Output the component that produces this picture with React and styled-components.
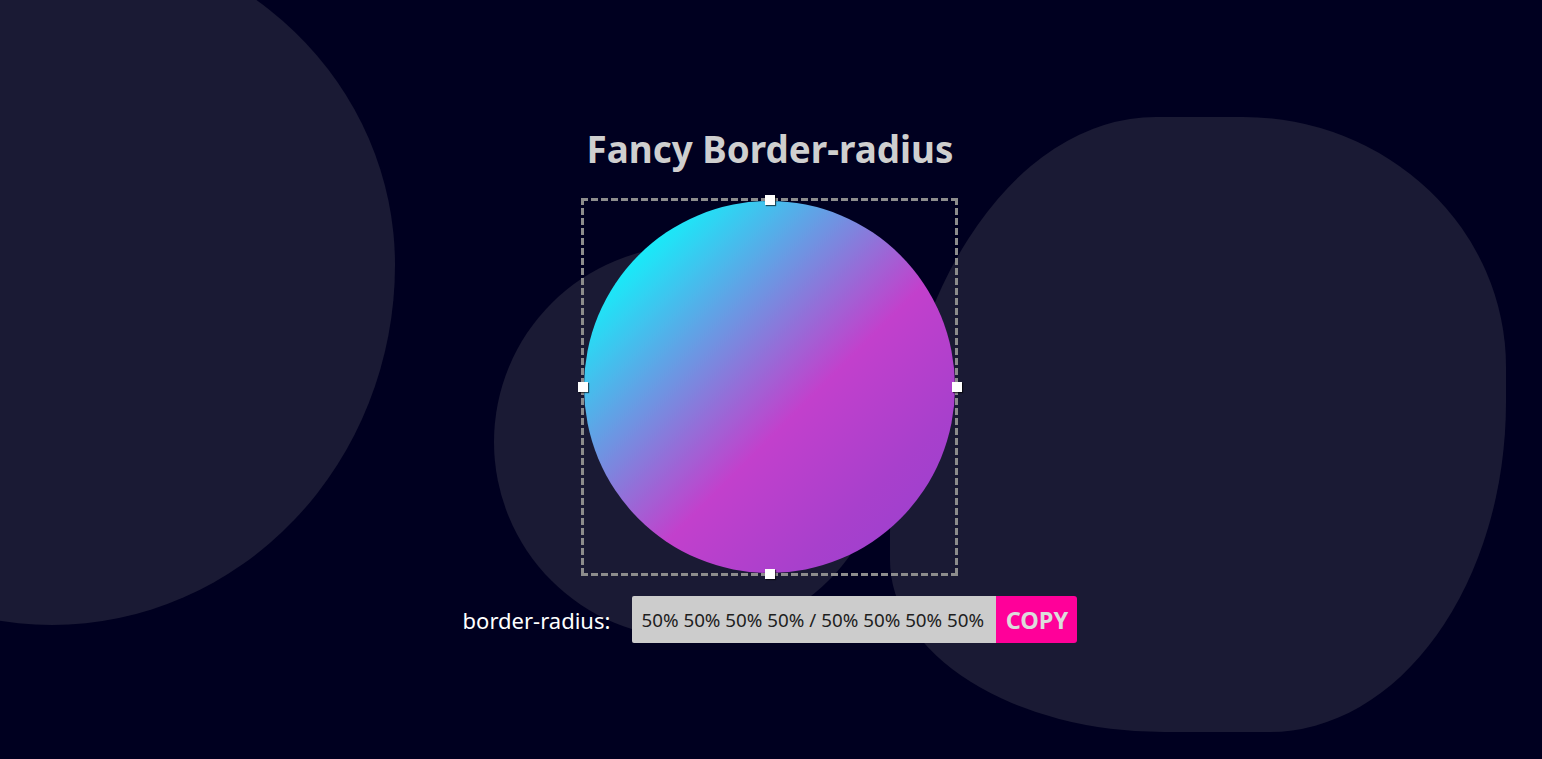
import React from "react";
import styled, { createGlobalStyle } from "styled-components";

const GlobalStyle = createGlobalStyle`
  html, body {
    margin: 0;
    padding: 0;
    background: #000020;
    font-family: "Noto Sans", "Open Sans", "Noto Sans CJK KR", sans-serif;
    overflow: hidden;
  }
`;

const Page = styled.div`
  position: relative;
  min-height: 100vh;
  overflow: hidden;
  display: flex;
  flex-direction: column;
  align-items: center;
  padding-top: 127px;
  box-sizing: border-box;
`;

// decorative background shapes
const Blob = styled.div`
  position: absolute;
  left: ${(p) => p.x}px;
  top: ${(p) => p.y}px;
  width: ${(p) => p.w}px;
  height: ${(p) => p.h}px;
  border-radius: ${(p) => p.radius};
  background: #1a1a34;
  z-index: 0;
`;

const Main = styled.main`
  position: relative;
  z-index: 1;
  display: flex;
  flex-direction: column;
  align-items: center;
  margin-left: -2px;
`;

const Title = styled.h1`
  margin: 0 0 27px;
  font-size: 36.8px;
  line-height: 44px;
  font-weight: 700;
  color: #cfcfcf;
`;

const dashH = "repeating-linear-gradient(90deg, #8c8c8c 0 7px, transparent 7px 10px)";
const dashV = "repeating-linear-gradient(180deg, #8c8c8c 0 7px, transparent 7px 10px)";

const Stage = styled.div`
  position: relative;
  width: 377px;
  height: 378px;
  box-sizing: border-box;
  padding: 3px;
  background:
    ${dashH} left top / 100% 3px no-repeat,
    ${dashH} left bottom / 100% 3px no-repeat,
    ${dashV} left top / 3px 100% no-repeat,
    ${dashV} right top / 3px 100% no-repeat;
`;

const Shape = styled.div`
  width: 100%;
  height: 100%;
  border-radius: 50% 50% 50% 50% / 50% 50% 50% 50%;
  background: linear-gradient(
    135deg,
    #00ffff 0%,
    #1ae9f8 15%,
    #c240cc 57%,
    #a840cc 78%,
    #9540d0 100%
  );
`;

const Handle = styled.span`
  position: absolute;
  width: 10px;
  height: 10px;
  background: #fff;
  box-shadow: 1px 1px 1px rgba(0, 0, 0, 0.6);
  transform: translate(-50%, -50%);
  left: ${(p) => p.left};
  top: ${(p) => p.top};
`;

const Row = styled.div`
  display: flex;
  align-items: center;
  margin-top: 20px;
`;

const Label = styled.label`
  color: #fff;
  font-size: 22px;
  margin-right: 22px;
`;

const Field = styled.input`
  width: 364px;
  height: 47px;
  box-sizing: border-box;
  border: none;
  outline: none;
  background: #cccccc;
  color: #1e1e1e;
  font-family: inherit;
  font-size: 18.8px;
  padding: 0 9px;
  border-radius: 2px 0 0 2px;
`;

const CopyButton = styled.button`
  width: 81px;
  height: 47px;
  border: none;
  background: #ff0099;
  color: #dcdcdc;
  font-family: inherit;
  font-size: 23.5px;
  font-weight: 700;
  border-radius: 0 3px 3px 0;
  cursor: pointer;
  padding: 0;
`;

const value = "50% 50% 50% 50% / 50% 50% 50% 50%";

export default function App() {
  return (
    <Page>
      <GlobalStyle />
      <Blob x={-291} y={-65} w={686} h={690} radius="343px / 330px 330px 360px 360px" />
      <Blob x={494} y={246} w={392} h={392} radius="50%" />
      <Blob
        x={890}
        y={117}
        w={616}
        h={615}
        radius="266px 263px 237px 274px / 418px 250px 330px 172px"
      />
      <Main>
        <Title>Fancy Border-radius</Title>
        <Stage>
          <Shape />
          <Handle left="50%" top="2px" />
          <Handle left="1.5px" top="50%" />
          <Handle left="calc(100% - 1.5px)" top="50%" />
          <Handle left="50%" top="calc(100% - 2px)" />
        </Stage>
        <Row>
          <Label htmlFor="radius">border-radius:</Label>
          <Field id="radius" readOnly value={value} />
          <CopyButton>COPY</CopyButton>
        </Row>
      </Main>
    </Page>
  );
}
